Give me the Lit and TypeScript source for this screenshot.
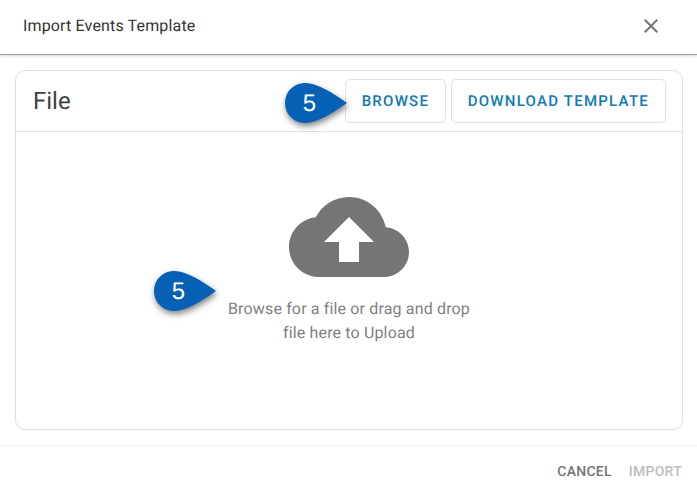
import { LitElement, html, css } from "lit";
import { customElement } from "lit/decorators.js";

const badge = (cls: string) => html`
  <div class="badge ${cls}">
    <svg width="66" height="42" viewBox="0 0 66 42"><path d="M0 21C0 9.500 9 1 20.500 1C32 1 48 11 62 21C48 31 32 41 20.500 41C9 41 0 32.500 0 21Z" fill="#0560b6"/></svg>
    <span class="num">5</span>
  </div>`;

@customElement("app-root")
export class AppRoot extends LitElement {
  static styles = css`
    :host { display: block; width: 697px; height: 495px; background: #fff; font-family: Roboto, sans-serif; position: relative; overflow: hidden; text-rendering: geometricPrecision; }
    .top { height: 55px; box-sizing: border-box; padding: 0 34px 2px 23px; display: flex; align-items: center; justify-content: space-between; border-bottom: 1px solid #9e9e9e; box-shadow: 0 1px 3px rgba(0,0,0,.18); }
    .title { font-size: 16px; font-weight: 400; letter-spacing: .15px; color: #333; margin-top: -1px; }
    .close { display: block; }
    .body { padding: 15px 14px 0 15px; }
    .card { height: 360px; box-sizing: border-box; border: 1px solid #e0e0e0; border-radius: 10px; display: flex; flex-direction: column; }
    .card-head { height: 61px; flex: none; box-sizing: border-box; border-bottom: 1px solid #e0e0e0; display: flex; align-items: center; justify-content: space-between; padding: 0 16px 0 17px; }
    .file { font-size: 24px; color: #424242; }
    .btns { display: flex; gap: 4.500px; }
    .btn { height: 44px; box-sizing: border-box; padding: 0 16px; display: flex; align-items: center; border: 1px solid #e0e0e0; border-radius: 5px; font-size: 15px; font-weight: 500; letter-spacing: 1.25px; color: #1279b3; }
    .drop { display: flex; flex-direction: column; align-items: center; padding-top: 45px; }
    .cloud { display: block; fill: #757575; }
    .hint { font-size: 16px; line-height: 24px; text-align: center; color: #808080; letter-spacing: .15px; }
    .foot { margin-top: 15px; height: 52px; box-sizing: border-box; border-top: 1px solid #f2f2f2; display: flex; justify-content: flex-end; align-items: center; gap: 17px; padding: 0 15px 0 0; font-size: 14px; font-weight: 500; letter-spacing: .25px; }
    .cancel { color: #757575; }
    .import { color: #bdbdbd; }
    .badge { position: absolute; width: 66px; height: 42px; }
    .badge svg { display: block; filter: drop-shadow(1px 3px 3px rgba(0,0,0,.5)); }
    .num { position: absolute; left: 0; top: 1px; width: 49px; line-height: 42px; text-align: center; color: #fff; font-family: "Liberation Sans", Arial, sans-serif; font-size: 24px; }
    .b1 { left: 285px; top: 82px; }
    .b2 { left: 154px; top: 270px; }
  `;

  render() {
    return html`
      <div class="top">
        <div class="title">Import Events Template</div>
        <svg class="close" width="24" height="24" viewBox="0 0 24 24"><path d="M19 6.410 17.590 5 12 10.590 6.410 5 5 6.410 10.590 12 5 17.590 6.410 19 12 13.410 17.590 19 19 17.590 13.410 12z" fill="#757575"/></svg>
      </div>
      <div class="body">
        <div class="card">
          <div class="card-head">
            <div class="file">File</div>
            <div class="btns">
              <div class="btn">BROWSE</div>
              <div class="btn">DOWNLOAD TEMPLATE</div>
            </div>
          </div>
          <div class="drop">
            <svg class="cloud" width="120" height="120" viewBox="0 0 24 24"><path d="M19.350 10.040C18.670 6.590 15.640 4 12 4 9.110 4 6.600 5.640 5.350 8.040 2.340 8.360 0 10.910 0 14c0 3.310 2.690 6 6 6h13c2.760 0 5-2.240 5-5 0-2.640-2.050-4.780-4.650-4.960zM14 13v4h-4v-4H7l5-5 5 5h-3z"/></svg>
            <div class="hint">Browse for a file or drag and drop<br />file here to Upload</div>
          </div>
        </div>
      </div>
      <div class="foot">
        <span class="cancel">CANCEL</span>
        <span class="import">IMPORT</span>
      </div>
      ${badge("b1")}
      ${badge("b2")}
    `;
  }
}
